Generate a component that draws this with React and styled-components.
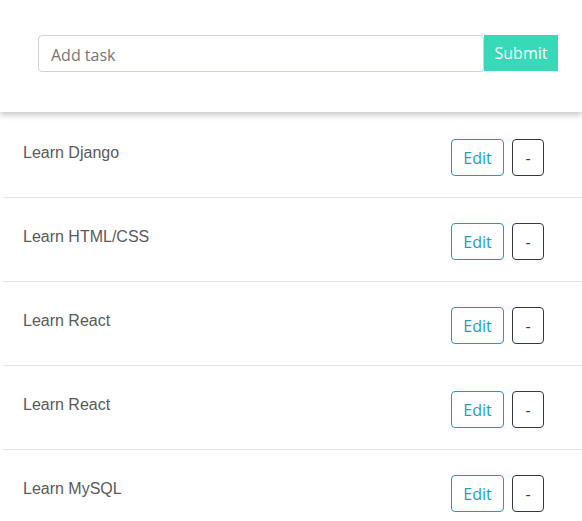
import React from "react";
import styled, { createGlobalStyle } from "styled-components";

const GlobalStyle = createGlobalStyle`
  body {
    margin: 0;
    background: #fff;
    font-family: "Liberation Sans", Arial, sans-serif;
  }
`;

const Header = styled.header`
  position: relative;
  z-index: 1;
  height: 112px;
  box-sizing: border-box;
  padding: 35px 24px 0 38px;
  background: #fff;
  box-shadow: 0 3px 6px rgba(0, 0, 0, 0.22);
`;

const Form = styled.form`
  display: flex;
  align-items: flex-start;
`;

const TaskInput = styled.input`
  flex: 1;
  height: 37px;
  box-sizing: border-box;
  padding: 3px 12px 0;
  border: 1px solid #ced4da;
  border-radius: 4px;
  font-family: "Open Sans", "Noto Sans", sans-serif;
  font-size: 16px;
  color: #495057;
  outline: none;

  ::placeholder {
    color: #6c757d;
  }
`;

const SubmitButton = styled.button`
  width: 74px;
  height: 36px;
  border: none;
  border-radius: 0;
  background: #37d9b8;
  color: #fff;
  font-family: "Open Sans", "Noto Sans", sans-serif;
  font-size: 16px;
  padding: 0;
`;

const List = styled.ul`
  list-style: none;
  margin: 2px 0 0 3px;
  padding: 0;
`;

const Row = styled.li`
  display: flex;
  justify-content: space-between;
  align-items: flex-start;
  height: 84px;
  box-sizing: border-box;
  padding: 25px 38px 0 20px;
  border-bottom: 1px solid #e6e6e6;
`;

const TaskText = styled.span`
  margin-top: 5px;
  font-size: 16px;
  line-height: 18px;
  color: #5a5a5a;
`;

const Actions = styled.div`
  display: flex;
  gap: 8px;
`;

const ActionButton = styled.button`
  height: 37px;
  box-sizing: border-box;
  padding: 0 10px;
  min-width: ${(p) => (p.$dark ? "32px" : "53px")};
  background: #fff;
  border: 1px solid ${(p) => (p.$dark ? "#343a40" : "#17a2b8")};
  border-radius: 4px;
  color: ${(p) => (p.$dark ? "#343a40" : "#17a2b8")};
  font-family: "Open Sans", "Noto Sans", sans-serif;
  font-size: 16px;
`;

const tasks = [
  "Learn Django",
  "Learn HTML/CSS",
  "Learn React",
  "Learn React",
  "Learn MySQL",
];

export default function App() {
  return (
    <>
      <GlobalStyle />
      <Header>
        <Form onSubmit={(e) => e.preventDefault()}>
          <TaskInput placeholder="Add task" />
          <SubmitButton type="submit">Submit</SubmitButton>
        </Form>
      </Header>
      <List>
        {tasks.map((t, i) => (
          <Row key={i}>
            <TaskText>{t}</TaskText>
            <Actions>
              <ActionButton>Edit</ActionButton>
              <ActionButton $dark>-</ActionButton>
            </Actions>
          </Row>
        ))}
      </List>
    </>
  );
}
